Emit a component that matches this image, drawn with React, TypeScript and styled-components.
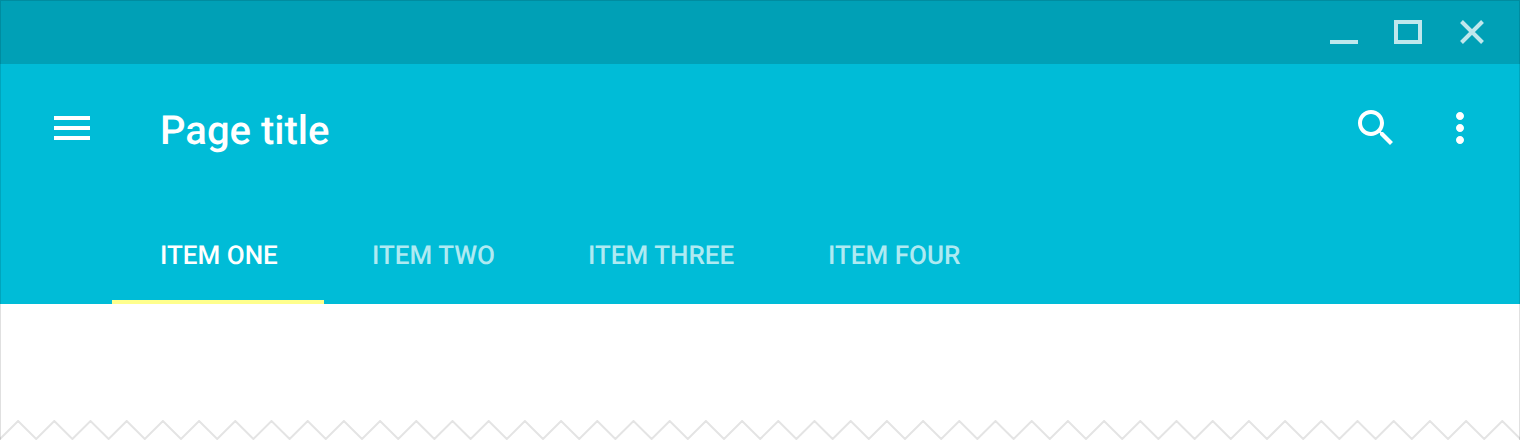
import React from "react";
import styled, { createGlobalStyle } from "styled-components";

const GlobalStyle = createGlobalStyle`
  html, body { margin: 0; padding: 0; background: #fff; }
  body { font-family: Roboto, "Liberation Sans", sans-serif; text-rendering: geometricPrecision; }
`;

const Frame = styled.div`
  position: relative;
  width: 1520px;
  height: 440px;
  overflow: hidden;
  display: flex;
  flex-direction: column;
  background: #fff;
  &::after {
    content: "";
    position: absolute;
    inset: 0;
    border: solid rgba(0, 0, 0, 0.12);
    border-width: 1px 1px 0 1px;
    pointer-events: none;
  }
`;

const StatusBar = styled.div`
  height: 64px;
  flex: none;
  background: #00a0b6;
  display: flex;
  justify-content: flex-end;
  align-items: flex-start;
  padding-right: 36px;
`;

const WindowControl = styled.svg`
  display: block;
  width: 28px;
  height: 24px;
  margin-top: 20px;
  margin-left: 36px;
  fill: none;
  stroke: #fff;
  stroke-opacity: 0.75;
  stroke-width: 4;
`;

const CloseControl = styled(WindowControl)`
  width: 24px;
  margin-left: 38px;
`;

const AppBar = styled.header`
  flex: none;
  height: 240px;
  background: #00bcd7;
  display: flex;
  flex-direction: column;
`;

const Toolbar = styled.div`
  display: flex;
  align-items: flex-start;
  padding: 40px 36px 0 48px;
  height: 136px;
  box-sizing: border-box;
`;

const Icon = styled.svg`
  display: block;
  width: 48px;
  height: 48px;
  flex: none;
  fill: #fff;
`;

const MoreIcon = styled(Icon)`
  margin-left: 36px;
`;

const Title = styled.h1`
  flex: 1;
  margin: 1px 0 0 64px;
  font-family: Roboto, "Liberation Sans", sans-serif;
  font-size: 40px;
  font-weight: 500;
  line-height: 52px;
  color: #fff;
`;

const Tabs = styled.nav`
  display: grid;
  grid-template-columns: 212px 216px 240px max-content;
  height: 104px;
  margin-left: 112px;
`;

const Tab = styled.div<{ $active?: boolean }>`
  box-sizing: border-box;
  height: 104px;
  padding: 38px 0 0 48px;
  font-size: 26px;
  font-weight: 480;
  line-height: 36px;
  white-space: nowrap;
  color: ${(p) => (p.$active ? "#fff" : "rgba(255, 255, 255, 0.7)")};
  border-bottom: 4px solid ${(p) => (p.$active ? "#ffff8d" : "transparent")};
`;

const Content = styled.main`
  flex: 1;
  display: flex;
  align-items: flex-end;
`;

const Zigzag = styled.svg`
  display: block;
  width: 1520px;
  height: 20px;
  fill: none;
  stroke: #e4e4e4;
  stroke-width: 2;
`;

const zigzagPoints = Array.from(
  { length: 86 },
  (_, i) => `${(i * 18.1).toFixed(1)},${i % 2 === 0 ? 19 : 1}`
).join(" ");

export default function App() {
  return (
    <Frame>
      <GlobalStyle />
      <StatusBar>
        <WindowControl viewBox="0 0 28 24"><path d="M0 22h28" /></WindowControl>
        <WindowControl viewBox="0 0 28 24"><rect x="2" y="2" width="24" height="20" /></WindowControl>
        <CloseControl viewBox="0 0 24 24"><path d="M1.5 1.5l21 21M22.5 1.5l-21 21" /></CloseControl>
      </StatusBar>
      <AppBar>
        <Toolbar>
          <Icon viewBox="0 0 24 24"><path d="M3 18h18v-2H3v2zm0-5h18v-2H3v2zm0-7v2h18V6H3z" /></Icon>
          <Title>Page title</Title>
          <Icon viewBox="0 0 24 24"><path d="M15.5 14h-.79l-.28-.27C15.41 12.59 16 11.11 16 9.5 16 5.91 13.09 3 9.5 3S3 5.91 3 9.5 5.91 16 9.5 16c1.61 0 3.09-.59 4.23-1.57l.27.28v.79l5 4.99L20.49 19l-4.99-5zm-6 0C7.01 14 5 11.99 5 9.5S7.01 5 9.5 5 14 7.01 14 9.5 11.99 14 9.5 14z" /></Icon>
          <MoreIcon viewBox="0 0 24 24"><path d="M12 8c1.1 0 2-.9 2-2s-.9-2-2-2-2 .9-2 2 .9 2 2 2zm0 2c-1.1 0-2 .9-2 2s.9 2 2 2 2-.9 2-2-.9-2-2-2zm0 6c-1.1 0-2 .9-2 2s.9 2 2 2 2-.9 2-2-.9-2-2-2z" /></MoreIcon>
        </Toolbar>
        <Tabs>
          <Tab $active>ITEM ONE</Tab>
          <Tab>ITEM TWO</Tab>
          <Tab>ITEM THREE</Tab>
          <Tab>ITEM FOUR</Tab>
        </Tabs>
      </AppBar>
      <Content>
        <Zigzag viewBox="0 0 1520 20"><polyline points={zigzagPoints} /></Zigzag>
      </Content>
    </Frame>
  );
}
